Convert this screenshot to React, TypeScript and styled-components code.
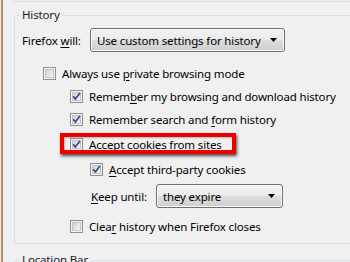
import React from "react";
import styled, { createGlobalStyle } from "styled-components";

const Global = createGlobalStyle`
  html, body { margin: 0; padding: 0; }
  body {
    width: 350px; height: 262px; overflow: hidden;
    background: #f0f0f0;
    font-family: "Noto Sans", "Open Sans", sans-serif;
    font-size: 11.5px;
    letter-spacing: -0.15px;
    color: #000;
  }
`;

const Page = styled.div`
  margin-left: 1px;
  border-left: 2px solid #ae8d68;
  padding-left: 11px;
  height: 262px;
  box-sizing: border-box;
  display: flex;
  flex-direction: column;
  overflow: hidden;
`;

const PrevTail = styled.div`
  height: 1px;
  flex: none;
  border-left: 1px solid #d5dfe5;
  border-bottom: 1px solid #d5dfe5;
  border-bottom-left-radius: 3px;
`;

const Group = styled.fieldset<{ $top: number }>`
  margin: ${(p) => p.$top}px 0 0 0;
  padding: 0;
  flex: none;
  min-inline-size: 0;
  border: 1px solid #d5dfe5;
  border-right: none;
  border-radius: 3px 0 0 3px;
`;

const Legend = styled.legend`
  margin-left: 5px;
  padding: 0 2px;
  line-height: 16px;
  color: #1a1a2a;
`;

const Content = styled.div`
  display: flex;
  flex-direction: column;
  padding: 5px 0 5px 7px;
`;

const Row = styled.div<{ $indent: number; $mt?: number; $h?: number }>`
  display: flex;
  align-items: center;
  height: ${(p) => p.$h ?? 23}px;
  margin-left: ${(p) => p.$indent}px;
  margin-top: ${(p) => p.$mt ?? 0}px;
`;

const Label = styled.span<{ $w: number }>`
  width: ${(p) => p.$w}px;
  flex: none;
  white-space: nowrap;
`;

const Key = styled.span`
  text-decoration: underline;
  text-underline-offset: 2px;
`;

const Select = styled.div<{ $w: number }>`
  box-sizing: border-box;
  width: ${(p) => p.$w}px;
  height: 24px;
  border: 1px solid #707070;
  border-radius: 3px;
  background: linear-gradient(#f2f2f2 0%, #ebebeb 50%, #dddddd 50%, #cfcfcf 100%);
  box-shadow: inset 0 0 0 1px #fbfbfb;
  display: flex;
  align-items: center;
  justify-content: space-between;
  padding: 0 7px 0 6px;
  white-space: nowrap;
`;

const Check = styled.label`
  display: inline-flex;
  align-items: center;
  gap: 6px;
  white-space: nowrap;
  position: relative;
`;

const Highlight = styled.span`
  position: absolute;
  top: -4px;
  bottom: -2px;
  left: -10px;
  right: -14px;
  border: 4px solid #ee0000;
  box-shadow: 1px 2px 3px rgba(0, 0, 0, 0.7), inset 1px 1px 2px rgba(0, 0, 0, 0.25);
  pointer-events: none;
`;

const Arrow = () => (
  <svg width="7" height="4" viewBox="0 0 7 4" style={{ flex: "none" }}>
    <polygon points="0,0 7,0 3.5,4" fill="#000" />
  </svg>
);

const Box = ({ checked }: { checked: boolean }) => (
  <svg width="13" height="13" viewBox="0 0 13 13" style={{ flex: "none" }}>
    <defs>
      <linearGradient id="cbg" x1="0" y1="0" x2="1" y2="1">
        <stop offset="0" stopColor="#cfcfcf" />
        <stop offset="1" stopColor="#f7f7f7" />
      </linearGradient>
    </defs>
    <rect x="0.5" y="0.5" width="12" height="12" fill="#f4f4f4" stroke="#8e8f8f" />
    <rect x="2.5" y="2.5" width="8" height="8" fill="url(#cbg)" stroke="#c4c4c4" />
    {checked && (
      <path d="M3.2 6.3 L5.4 8.9 L9.9 3" fill="none" stroke="#33478c" strokeWidth="1.7" />
    )}
  </svg>
);

export default function App() {
  return (
    <>
      <Global />
      <Page>
        <PrevTail />
        <Group $top={5}>
          <Legend>History</Legend>
          <Content>
            <Row $indent={0} $h={24}>
              <Label $w={68}>
                Firefox <Key>w</Key>ill:
              </Label>
              <Select $w={195}>
                <span>Use custom settings for history</span>
                <Arrow />
              </Select>
            </Row>
            <Row $indent={21} $mt={10}>
              <Check>
                <Box checked={false} />
                <span>
                  Always use <Key>p</Key>rivate browsing mode
                </span>
              </Check>
            </Row>
            <Row $indent={48}>
              <Check>
                <Box checked />
                <span>
                  Remem<Key>b</Key>er my browsing and download history
                </span>
              </Check>
            </Row>
            <Row $indent={48}>
              <Check>
                <Box checked />
                <span>
                  Remember search and <Key>f</Key>orm history
                </span>
              </Check>
            </Row>
            <Row $indent={48} $mt={2}>
              <Check>
                <Box checked />
                <span>
                  <Key>A</Key>ccept cookies from sites
                </span>
                <Highlight />
              </Check>
            </Row>
            <Row $indent={68} $mt={2}>
              <Check>
                <Box checked />
                <span>
                  <Key>A</Key>ccept third-party cookies
                </span>
              </Check>
            </Row>
            <Row $indent={69} $mt={3} $h={24}>
              <Label $w={65}>
                <Key>K</Key>eep until:
              </Label>
              <Select $w={127}>
                <span>they expire</span>
                <Arrow />
              </Select>
            </Row>
            <Row $indent={48} $mt={7}>
              <Check>
                <Box checked={false} />
                <span>
                  Clea<Key>r</Key> history when Firefox closes
                </span>
              </Check>
            </Row>
          </Content>
        </Group>
        <Group $top={8}>
          <Legend>Location Bar</Legend>
          <Content />
        </Group>
      </Page>
    </>
  );
}
